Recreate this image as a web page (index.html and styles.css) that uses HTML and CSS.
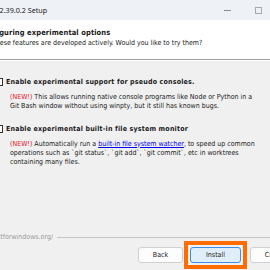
FILE: index.html
```html
<!DOCTYPE html>
<html lang="en">
<head>
    <meta charset="UTF-8">
    <title>Git 2.39.0.2 Setup</title>
    <link rel="stylesheet" href="styles.css">
</head>
<body>
    <div class="window">
        <div class="titlebar">
            <span class="title">Git 2.39.0.2 Setup</span>
            <div class="controls">
                <span class="min"></span>
                <span class="max"></span>
            </div>
        </div>

        <div class="header">
            <div class="heading">Configuring experimental options</div>
            <div class="subtitle">These features are developed actively. Would you like to try them?</div>
        </div>

        <div class="content">
            <div class="option">
                <div class="opt-label"><span class="box"></span>Enable experimental support for pseudo consoles.</div>
                <div class="desc"><span class="new">(NEW!)</span> This allows running native console programs like Node or Python in a<br>Git Bash window without using winpty, but it still has known bugs.</div>
            </div>
            <div class="option">
                <div class="opt-label"><span class="box"></span>Enable experimental built-in file system monitor</div>
                <div class="desc"><span class="new">(NEW!)</span> Automatically run a <a class="link" href="#">built-in file system watcher</a>, to speed up common<br>operations such as `git status`, `git add`, `git commit`, etc in worktrees<br>containing many files.</div>
            </div>
        </div>

        <div class="footer">
            <div class="brand">
                <div class="url-box"><span class="url">https://gitforwindows.org/</span></div>
                <span class="rule"></span>
            </div>
            <div class="buttons">
                <button class="btn back">Back</button>
                <span class="focus"><button class="btn primary">Install</button></span>
                <button class="btn">Cancel</button>
            </div>
        </div>
    </div>
</body>
</html>
```

FILE: styles.css
```css
html, body {
    margin: 0;
    padding: 0;
    width: 100%;
    height: 100%;
    overflow: hidden;
    background-color: #f0f0f0;
}

body {
    font-family: "DejaVu Sans Condensed", "DejaVu Sans", sans-serif;
    font-size: 7px;
    color: #1a1a1a;
}

.window {
    width: 270px;
    height: 270px;
    display: flex;
    flex-direction: column;
    overflow: hidden;
}

/* title bar */
.titlebar {
    height: 20px;
    flex: none;
    display: flex;
    align-items: center;
    background-color: #eef1f6;
    font-family: "Noto Sans", sans-serif;
    font-size: 7.2px;
    color: #1b1b1b;
}

.title {
    margin-left: -12px;
    white-space: nowrap;
}

.controls {
    margin-left: auto;
    display: flex;
    align-items: center;
    padding-right: 8px;
}

.min {
    width: 7px;
    height: 1px;
    background-color: #8a8a8a;
}

.max {
    width: 5px;
    height: 5px;
    border: 1px solid #a8a8a8;
    margin-left: 24px;
}

/* white header */
.header {
    height: 40px;
    flex: none;
    padding-top: 8px;
    box-sizing: border-box;
    background-color: #fff;
    border-bottom: 1px solid #a0a0a0;
    box-shadow: 0 1px 0 #fff;
    white-space: nowrap;
}

.heading {
    font-weight: bold;
    line-height: 10px;
    font-size: 7.5px;
    letter-spacing: 0.1px;
    text-indent: -21px;
}

.subtitle {
    line-height: 11px;
    text-indent: -8px;
}

/* options */
.content {
    padding: 17px 0 0 10px;
    white-space: nowrap;
}

.option + .option {
    margin-top: 13.5px;
}

.opt-label {
    display: flex;
    align-items: center;
    margin-left: -15px;
    line-height: 10px;
    font-weight: bold;
    letter-spacing: 0.2px;
}

.box {
    width: 6px;
    height: 6px;
    border: 1px solid #333;
    background-color: #fff;
    margin-right: 3px;
    flex: none;
}

.desc {
    margin-top: 5.5px;
    line-height: 9px;
}

.new {
    color: #e81123;
}

.link {
    color: #0000ee;
}

/* footer */
.footer {
    margin-top: auto;
    padding-bottom: 1px;
}

.brand {
    display: flex;
    align-items: center;
    height: 10px;
}

.url-box {
    width: 53px;
    flex: none;
    display: flex;
    justify-content: flex-end;
    overflow: hidden;
}

.url {
    color: #9a9a9a;
    white-space: nowrap;
}

.rule {
    flex: 1;
    height: 1px;
    margin-left: 4px;
    background-color: #c6c6c6;
}

.buttons {
    display: flex;
    align-items: center;
    margin-top: -1px;
    padding-left: 138px;
}

.btn {
    flex: none;
    width: 51px;
    height: 16px;
    padding: 0;
    margin: 0;
    box-sizing: border-box;
    border: 1px solid #d0d0d0;
    border-radius: 3px;
    background-color: #fdfdfd;
    font-family: "DejaVu Sans Condensed", "DejaVu Sans", sans-serif;
    font-size: 7px;
    color: #1a1a1a;
}

.back {
    width: 45px;
    margin-right: 1px;
}

/* orange highlight round the default button */
.focus {
    flex: none;
    display: flex;
    padding: 2px;
    margin-right: 3px;
    border: 4px solid #ff6d00;
}

.primary {
    background-color: #e0eef9;
    border-color: #3a8ee6;
}
```
